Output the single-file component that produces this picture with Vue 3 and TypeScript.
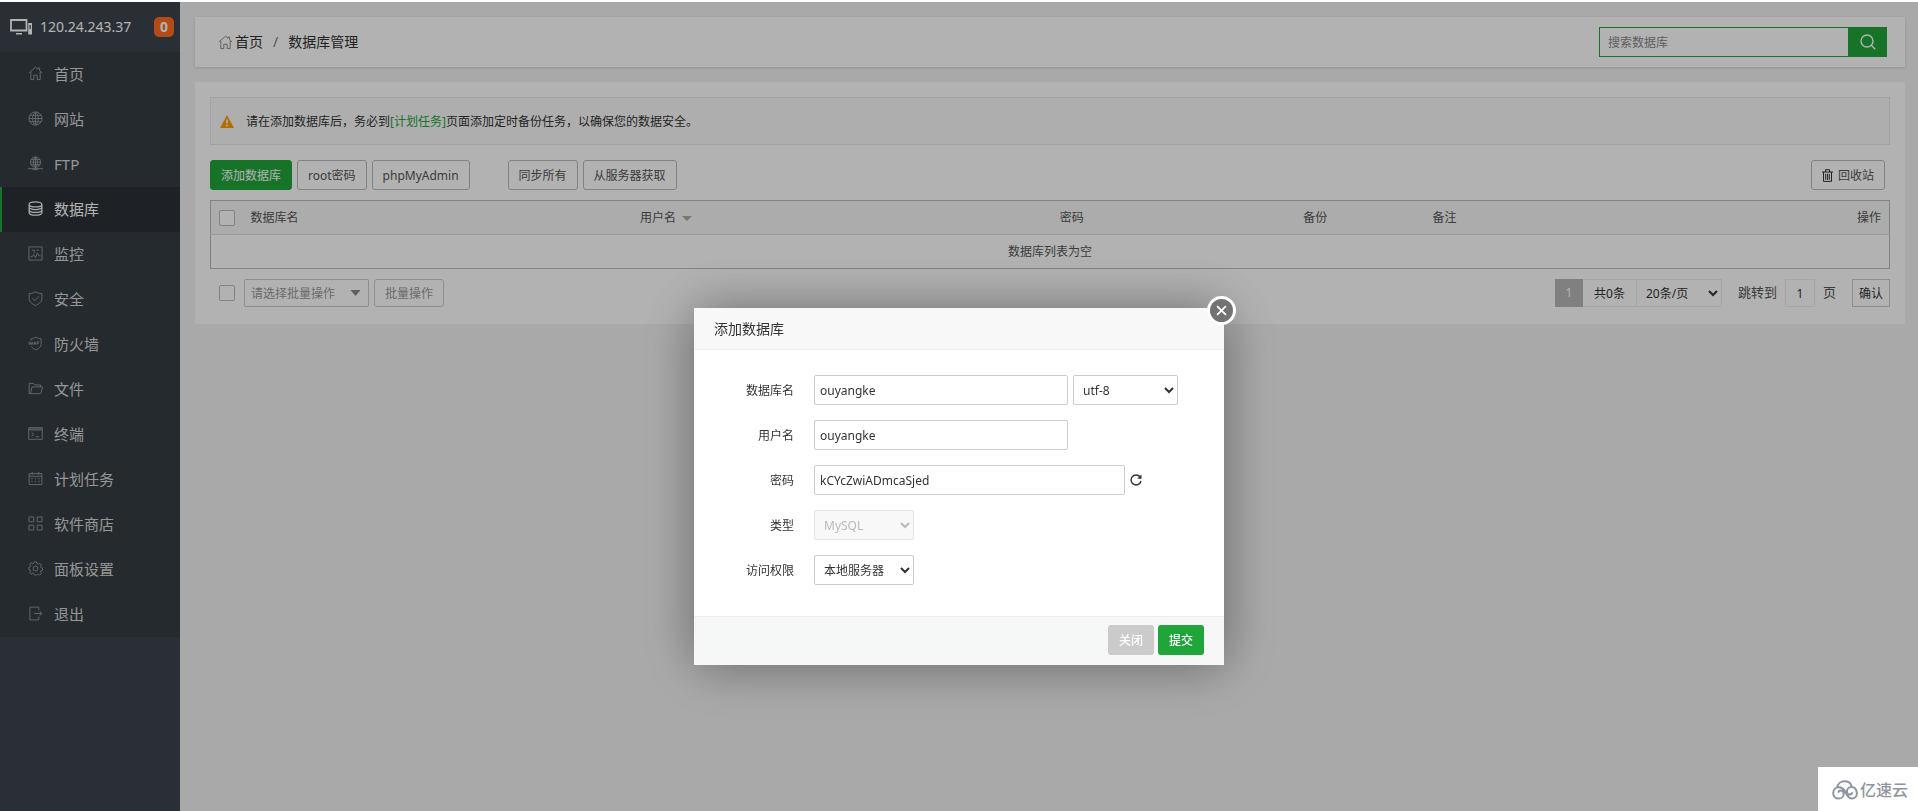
<script setup lang="ts">
import { ref } from 'vue'

interface MenuItem {
  label: string
  path: string
  active?: boolean
}

const menu: MenuItem[] = [
  { label: '首页', path: 'M1 7.4L8 1.2l2.6 2.3V2.2h1.8v2.9L15 7.4M3 6.4V14.5h3.2V9.8h3.6v4.7H13V6.4' },
  { label: '网站', path: 'M8 1a7 7 0 1 0 0 14A7 7 0 1 0 8 1zM8 1v14M1 8h14M2 4.6h12M2 11.4h12M8 1C4 4 4 12 8 15M8 1c4 3 4 11 0 14' },
  { label: 'FTP', path: 'M8 1a5.5 5.5 0 1 0 0 11A5.5 5.5 0 1 0 8 1zM8 1v13M2.5 6.5h11M3.4 3.8h9.2M3.4 9.2h9.2M8 1C5 3.6 5 9.4 8 12M8 1c3 2.6 3 8.4 0 11M0 13.5h16M5 14.500h6' },
  { label: '数据库', active: true, path: 'M8 1C4.2 1 1.2 2.1 1.2 3.6S4.2 6.2 8 6.2s6.800-1.100 6.800-2.600S11.800 1 8 1zM1.200 3.600v8.800C1.200 13.900 4.200 15 8 15s6.800-1.100 6.800-2.600V3.600M1.200 6.500C1.200 8 4.200 9.100 8 9.100s6.800-1.100 6.800-2.600M1.200 9.500c0 1.500 3 2.600 6.800 2.600s6.800-1.100 6.800-2.600' },
  { label: '监控', path: 'M1 1h14v14H1zM2.500 11.500h2l1.500-2.500 2 3.500 2-5 1.500 3h2M4.500 4.500h3M9 4.500h2.500M6 6.500h2' },
  { label: '安全', path: 'M8 .8C6 2 3.800 2.800 1.200 2.800v5.600c0 3.200 3.300 5.500 6.800 7 3.500-1.500 6.800-3.800 6.800-7V2.800C12.200 2.800 10 2 8 .8zM4.800 7.700l2.500 2.600 4.400-4.700' },
  { label: '防火墙', path: 'M3 5V3C5 3 6.500 2.300 8.500 1.200 10.500 2.300 12 3 14 3v6c0 2.800-2.800 4.600-5.500 5.800C6.500 13.900 4.200 12.700 3.300 11M.8 6.200l.9 3 1.100-2.800L4 9.200l.9-3M6 9.200l1.200-3 1.200 3M6.500 8.300h1.500M9.700 9.200v-3H12M9.700 7.700h1.800' },
  { label: '文件', path: 'M2.600 13.500H1.200V2.500h4.500l1.500 1.700h6.300v2.100M2.600 13.500L4.300 6.300h11.200L13.600 13.500z' },
  { label: '终端', path: 'M.8 1.800h14.400v12.400H.8zM.8 3.200h14.400M.8 4.200h14.400M3.800 7l2.500 2-2.500 2M8 11.500h4' },
  { label: '计划任务', path: 'M1.200 2.800h13.600v11.700H1.200zM1.200 5.600h13.600M4.500 1v3M11.500 1v3M3.500 8.200h1.500M7.200 8.200h1.500M11 8.200h1.500M3.500 11.300h1.500M7.200 11.300h1.500M11 11.300h1.500' },
  { label: '软件商店', path: 'M1.500 1h4.700v5.200H1V1zM9.800 1H15v5.200H9.800zM1 9.800h5.200V15H1zM9.800 9.800H15V15H9.800z' },
  { label: '面板设置', path: 'M6.800 1h2.400l.5 1.900 1.300.5 1.600-1 1.700 1.700-1 1.600.5 1.300 1.700.5v2.400l-1.700.5-.5 1.300 1 1.600-1.700 1.700-1.600-1-1.300.5L9.200 15H6.800l-.5-1.500L5 13l-1.600 1-1.700-1.700 1-1.600-.5-1.300L.8 9V6.900l1.400-.5.500-1.300-1-1.600L3.400 1.900 5 2.900l1.300-.5zM8 5.400a2.600 2.600 0 1 0 0 5.200 2.600 2.600 0 1 0 0-5.200z' },
  { label: '退出', path: 'M11.500 4.500V1.200h-9.500v13.600h9.500V11.500M6.500 8h8M12.300 5.500L15 8l-2.700 2.500' },
]

const dbName = ref('ouyangke')
const userName = ref('ouyangke')
const password = ref('kCYcZwiADmcaSjed')
const page = ref('1')
</script>

<template>
  <div class="layout">
    <aside class="sidebar">
      <div class="server">
        <svg class="server-icon" viewBox="0 0 22 16" aria-hidden="true">
          <path d="M1 1h15.500v10.500H1z" fill="none" stroke="currentColor" stroke-width="1.800" />
          <path d="M6 14h6v1.600H6zM18.200 4H22v11.500h-3.800z" fill="currentColor" />
          <path d="M19.500 6h1.200v4h-1.200z" fill="#3c444d" />
        </svg>
        <span class="ip">120.24.243.37</span>
        <span class="badge">0</span>
      </div>
      <nav class="menu">
        <a v-for="item in menu" :key="item.label" href="#" :class="['menu-item', { active: item.active }]">
          <svg viewBox="0 0 16 16" aria-hidden="true"><path :d="item.path" /></svg>
          <span>{{ item.label }}</span>
        </a>
      </nav>
    </aside>

    <main class="main">
      <header class="card topbar">
        <nav class="crumbs">
          <svg viewBox="0 0 16 16" aria-hidden="true"><path :d="menu[0].path" /></svg>
          <a href="#">首页</a>
          <span class="slash">/</span>
          <span>数据库管理</span>
        </nav>
        <form class="search" @submit.prevent>
          <input type="text" placeholder="搜索数据库" aria-label="搜索数据库" />
          <button type="submit" aria-label="搜索">
            <svg viewBox="0 0 16 16" aria-hidden="true"><path d="M7 1a6 6 0 1 0 0 12A6 6 0 1 0 7 1zM11.300 11.300L15.200 15.200" /></svg>
          </button>
        </form>
      </header>

      <section class="card content">
        <div class="notice">
          <svg viewBox="0 0 14 13" aria-hidden="true">
            <path d="M7 0l7 13H0z" fill="#ff9f00" />
            <path d="M6.200 4.500h1.600v4H6.200zM6.200 9.700h1.600v1.500H6.200z" fill="#fff" />
          </svg>
          <p>请在添加数据库后，务必到<a href="#">[计划任务]</a>页面添加定时备份任务，以确保您的数据安全。</p>
        </div>

        <div class="toolbar">
          <button type="button" class="btn primary">添加数据库</button>
          <button type="button" class="btn">root密码</button>
          <button type="button" class="btn">phpMyAdmin</button>
          <button type="button" class="btn group">同步所有</button>
          <button type="button" class="btn">从服务器获取</button>
          <button type="button" class="btn recycle">
            <svg viewBox="0 0 11 13" aria-hidden="true"><path d="M0 3h11M3.500 3V.7h4V3M1.500 3v9.400h8V3M3.700 4.800v6M5.500 4.800v6M7.300 4.800v6" /></svg>
            回收站
          </button>
        </div>

        <table class="grid">
          <colgroup>
            <col class="c-check" /><col class="c-name" /><col class="c-user" /><col class="c-pass" /><col class="c-backup" /><col />
            <col class="c-op" />
          </colgroup>
          <thead>
            <tr>
              <th><input type="checkbox" aria-label="全选" /></th>
              <th>数据库名</th>
              <th>用户名<span class="sort"></span></th>
              <th>密码</th>
              <th>备份</th>
              <th>备注</th>
              <th class="right">操作</th>
            </tr>
          </thead>
          <tbody>
            <tr><td colspan="7">数据库列表为空</td></tr>
          </tbody>
        </table>

        <div class="table-foot">
          <input type="checkbox" aria-label="选择全部" />
          <select class="batch" aria-label="批量操作">
            <option>请选择批量操作</option>
          </select>
          <button type="button" class="btn small muted">批量操作</button>
          <div class="pager">
            <span class="current">1</span>
            <span class="total">共0条</span>
            <select class="size" aria-label="每页条数"><option>20条/页</option></select>
            <label for="page">跳转到</label>
            <input id="page" v-model="page" type="text" />
            <span class="unit">页</span>
            <button type="button">确认</button>
          </div>
        </div>
      </section>
    </main>
  </div>

  <div class="mask">
    <section class="modal" role="dialog" aria-labelledby="modal-title">
      <h2 id="modal-title">添加数据库</h2>
      <button type="button" class="close" aria-label="关闭窗口">
        <svg viewBox="0 0 10 10" aria-hidden="true"><path d="M1 1l8 8M9 1L1 9" /></svg>
      </button>
      <form id="db-form" class="form" @submit.prevent>
        <div class="row">
          <label for="db">数据库名</label>
          <input id="db" v-model="dbName" type="text" />
          <select class="charset" aria-label="字符集"><option>utf-8</option></select>
        </div>
        <div class="row">
          <label for="user">用户名</label>
          <input id="user" v-model="userName" type="text" />
        </div>
        <div class="row">
          <label for="pwd">密码</label>
          <input id="pwd" v-model="password" class="wide" type="text" />
          <button type="button" class="refresh" aria-label="随机密码">
            <svg viewBox="0 0 12 12" aria-hidden="true">
              <path d="M10 2.800A5 5 0 1 0 11 7" fill="none" stroke="currentColor" stroke-width="1.400" />
              <path d="M11.500.5v4.300H7.200z" fill="currentColor" />
            </svg>
          </button>
        </div>
        <div class="row">
          <label for="type">类型</label>
          <select id="type" disabled><option>MySQL</option></select>
        </div>
        <div class="row">
          <label for="access">访问权限</label>
          <select id="access"><option>本地服务器</option></select>
        </div>
      </form>
      <footer>
        <button type="button" class="cancel">关闭</button>
        <button type="submit" form="db-form">提交</button>
      </footer>
    </section>
  </div>

  <div class="watermark">
    <svg viewBox="0 0 26 20" aria-hidden="true">
      <path d="M5.200 7.500C5.600 3.800 8.800 1.200 12.700 1.200c3.300 0 5.900 1.900 6.900 4.800M6.500 12.800c0-1.400 1-2.300 2.300-2.300 1.600 0 2.900 1.300 2.900 3.200 0 2.700-2.100 4.900-5 4.900-3.200 0-5.500-2.400-5.500-5.600 0-3.300 2.500-5.700 5.700-5.700 2.900 0 4.800 1.600 6.200 4.100 1.500 3 2.900 7.200 6.900 7.200 3 0 4.900-2.500 4.900-5.600 0-3.400-2.400-6-5.300-6-3 0-4.700 2.200-4.700 4.400 0 2 1.300 3.200 2.900 3.200 1.400 0 2.300-1 2.300-2.300" />
    </svg>
    <span>亿速云</span>
  </div>
</template>

<style>
body {
  background: #f3f3f3;
}
</style>

<style scoped>
* {
  box-sizing: border-box;
}

.layout,
.mask,
.watermark {
  color: #333;
  font: 12px/18px "Noto Sans", "Noto Sans CJK SC", sans-serif;
}

input,
select,
button {
  margin: 0;
  color: inherit;
  font: inherit;
}

button {
  cursor: pointer;
}

a {
  color: inherit;
  text-decoration: none;
}

svg {
  flex: none;
  fill: none;
  stroke: currentColor;
}

.layout {
  display: flex;
  min-height: 100vh;
  border-top: 2px solid #fff;
}

.sidebar {
  width: 180px;
  flex: none;
  background: #3c444d;
}

.server {
  display: flex;
  align-items: center;
  height: 50px;
  padding: 0 6px 0 10px;
  color: #fff;
  font-size: 14px;
}

.server-icon {
  width: 22px;
  height: 16px;
  stroke: none;
}

.ip {
  margin-left: 8px;
}

.badge {
  width: 20px;
  margin-left: auto;
  border-radius: 5px;
  background: #ff6c23;
  font-weight: 700;
  line-height: 20px;
  text-align: center;
}

.menu {
  background: #353d44;
}

.menu-item {
  display: flex;
  align-items: center;
  gap: 11px;
  height: 45px;
  padding: 0 0 2px 26px;
  border-left: 2px solid transparent;
  color: #d6d7d9;
  font-size: 15px;
}

.menu-item svg {
  width: 15px;
  height: 15px;
  color: #92979c;
}

.menu-item.active {
  border-left-color: #20a53a;
  background: #2c3138;
  color: #fff;
}

.menu-item.active svg {
  color: #f2f2f2;
  stroke-width: 1.4;
}

.main {
  flex: 1;
  min-width: 0;
  padding: 15px 13px 15px 15px;
}

.card {
  background: #fff;
}

.topbar {
  display: flex;
  align-items: center;
  justify-content: space-between;
  height: 50px;
  padding: 0 18px 0 23px;
  box-shadow: 0 1px 3px rgba(0, 0, 0, 0.15);
}

.crumbs {
  display: flex;
  align-items: center;
  font-size: 14px;
}

.crumbs svg {
  width: 15px;
  height: 15px;
  margin-right: 2px;
  color: #888;
}

.slash {
  margin: 0 10px;
  color: #777;
}

.search {
  display: flex;
}

.search input {
  width: 249px;
  height: 30px;
  padding: 0 8px;
  border: 1px solid #20a53a;
  border-right: 0;
  background: #fff;
}

.search input::placeholder {
  color: #888;
}

.search button {
  display: grid;
  place-items: center;
  width: 39px;
  height: 30px;
  padding: 0;
  border: 0;
  background: #20a53a;
  color: #fff;
}

.search svg {
  width: 16px;
  height: 16px;
  stroke-width: 1.4;
}

.content {
  margin-top: 15px;
  padding: 15px 15px 17px;
}

.notice {
  display: flex;
  align-items: center;
  gap: 12px;
  height: 48px;
  padding: 1px 9px 0;
  border: 1px solid #e8e8e8;
  background: #fafafa;
}

.notice svg {
  width: 14px;
  height: 13px;
  stroke: none;
}

.notice p {
  margin: 0;
}

.notice a {
  color: #20a53a;
}

.toolbar {
  display: flex;
  gap: 5px;
  margin: 15px 0 10px;
}

.btn {
  height: 30px;
  padding: 1px 10px 0;
  border: 1px solid #bbb;
  border-radius: 3px;
  background: #fff;
  color: #555;
  white-space: nowrap;
}

.btn.primary {
  border-color: #20a53a;
  background: #20a53a;
  color: #fff;
}

.btn.group {
  margin-left: 33px;
}

.btn.recycle {
  display: flex;
  align-items: center;
  gap: 5px;
  margin: 0 5px 0 auto;
}

.recycle svg {
  width: 11px;
  height: 13px;
  color: #333;
}

.grid {
  width: 100%;
  border: 1px solid #bbb;
  border-collapse: collapse;
  table-layout: fixed;
}

.c-check {
  width: 32px;
}

.c-name {
  width: 23.2%;
}

.c-user {
  width: 25%;
}

.c-pass {
  width: 14.5%;
}

.c-backup {
  width: 7.7%;
}

.c-op {
  width: 60px;
}

.grid th,
.grid td {
  height: 34px;
  padding: 0 8px;
  color: #555;
  font-weight: 400;
  text-align: left;
}

.grid th {
  border-bottom: 1px solid #ddd;
  background: #f6f6f6;
}

.grid td {
  text-align: center;
}

.grid th.right {
  text-align: right;
}

input[type="checkbox"] {
  display: block;
  width: 16px;
  height: 16px;
  border: 1px solid #bbb;
  border-radius: 2px;
  appearance: none;
  background: #fff;
}

.sort {
  display: inline-block;
  margin-left: 6px;
  border: 5px solid transparent;
  border-top-color: #aaa;
  border-bottom: 0;
  vertical-align: middle;
}

.table-foot {
  display: flex;
  align-items: center;
  margin-top: 10px;
  padding-left: 9px;
}

.batch {
  width: 125px;
  height: 28px;
  margin: 0 5px 0 9px;
  padding: 1px 6px 0;
  border: 1px solid #ccc;
  border-radius: 2px;
  appearance: none;
  background: #fff url("data:image/svg+xml,%3Csvg xmlns='http://www.w3.org/2000/svg' viewBox='0 0 10 6'%3E%3Cpath d='M0 0h10L5 6z' fill='%23888'/%3E%3C/svg%3E") no-repeat right 7px center / 11px 6px;
  color: #999;
}

.btn.small {
  height: 28px;
}

.btn.muted {
  border-color: #ccc;
  color: #999;
}

.pager {
  display: flex;
  align-items: center;
  margin-left: auto;
}

.pager .current,
.pager .total {
  height: 28px;
  line-height: 28px;
  text-align: center;
}

.pager .current {
  width: 28px;
  background: #b8b8b8;
  color: #fff;
}

.pager .total {
  width: 54px;
  border: 1px solid #eee;
  border-left: 0;
}

.size {
  width: 85px;
  height: 28px;
  padding: 0 5px;
  border: 1px solid #eee;
  border-left: 0;
  background: #fff;
}

.pager label,
.unit {
  padding-bottom: 2px;
  color: #555;
  font-size: 13px;
}

.pager label {
  margin: 0 8px 0 16px;
}

.pager input {
  width: 30px;
  height: 28px;
  padding: 0;
  border: 1px solid #eee;
  text-align: center;
}

.unit {
  margin: 0 16px 0 8px;
}

.pager button {
  width: 38px;
  height: 28px;
  padding: 2px 0 0;
  border: 1px solid #ccc;
  background: #fff;
}

.mask {
  display: flex;
  align-items: flex-start;
  justify-content: center;
  position: fixed;
  inset: 2px 0 0;
  padding-top: 306px;
  background: rgba(0, 0, 0, 0.3);
}

.modal {
  position: relative;
  width: 530px;
  background: #fff;
  box-shadow: 1px 1px 50px rgba(0, 0, 0, 0.4);
}

.modal h2 {
  margin: 0;
  padding: 0 20px;
  border-bottom: 1px solid #eee;
  background: #f8f8f8;
  font-size: 14px;
  font-weight: 400;
  line-height: 41px;
}

.close {
  display: grid;
  place-items: center;
  position: absolute;
  top: -12px;
  right: -12px;
  width: 29px;
  height: 29px;
  padding: 0;
  border: 3px solid #fff;
  border-radius: 50%;
  background: #727272;
  color: #fff;
}

.close svg {
  width: 11px;
  height: 11px;
  stroke-width: 1.6;
}

.form {
  display: flex;
  flex-direction: column;
  gap: 15px;
  padding: 25px 0 31px;
}

.row {
  display: flex;
  align-items: center;
}

.row label {
  width: 100px;
  margin-right: 20px;
  padding-top: 2px;
  text-align: right;
}

.row input,
.row select {
  height: 30px;
  border: 1px solid #ccc;
  border-radius: 2px;
  background: #fff;
}

.row input {
  width: 254px;
  padding: 0 5px;
}

.row .wide {
  width: 311px;
}

.row select {
  width: 100px;
  padding: 0 5px;
}

.row .charset {
  width: 105px;
  margin-left: 5px;
}

.row select:disabled {
  border-color: #e5e5e5;
  background: #f8f8f8;
  color: #bbb;
  opacity: 1;
}

.refresh {
  display: flex;
  margin-left: 5px;
  padding: 0;
  border: 0;
  background: none;
}

.refresh svg {
  width: 12px;
  height: 12px;
  stroke: none;
}

.modal footer {
  display: flex;
  justify-content: flex-end;
  gap: 4px;
  padding: 8px 20px 10px;
  border-top: 1px solid #eee;
  background: #f6f7f7;
}

.modal footer button {
  width: 46px;
  height: 30px;
  padding: 1px 0 0;
  border: 0;
  border-radius: 3px;
  background: #20a53a;
  color: #fff;
  font-weight: 500;
}

.modal footer .cancel {
  background: #cbcbcb;
}

.watermark {
  display: flex;
  align-items: center;
  gap: 2px;
  position: fixed;
  right: 0;
  bottom: 0;
  width: 100px;
  height: 44px;
  padding: 2px 0 0 14px;
  background: #fff;
  color: #8e95a0;
  font-size: 16px;
  font-weight: 500;
}

.watermark svg {
  width: 26px;
  height: 20px;
  stroke-width: 2;
}
</style>
